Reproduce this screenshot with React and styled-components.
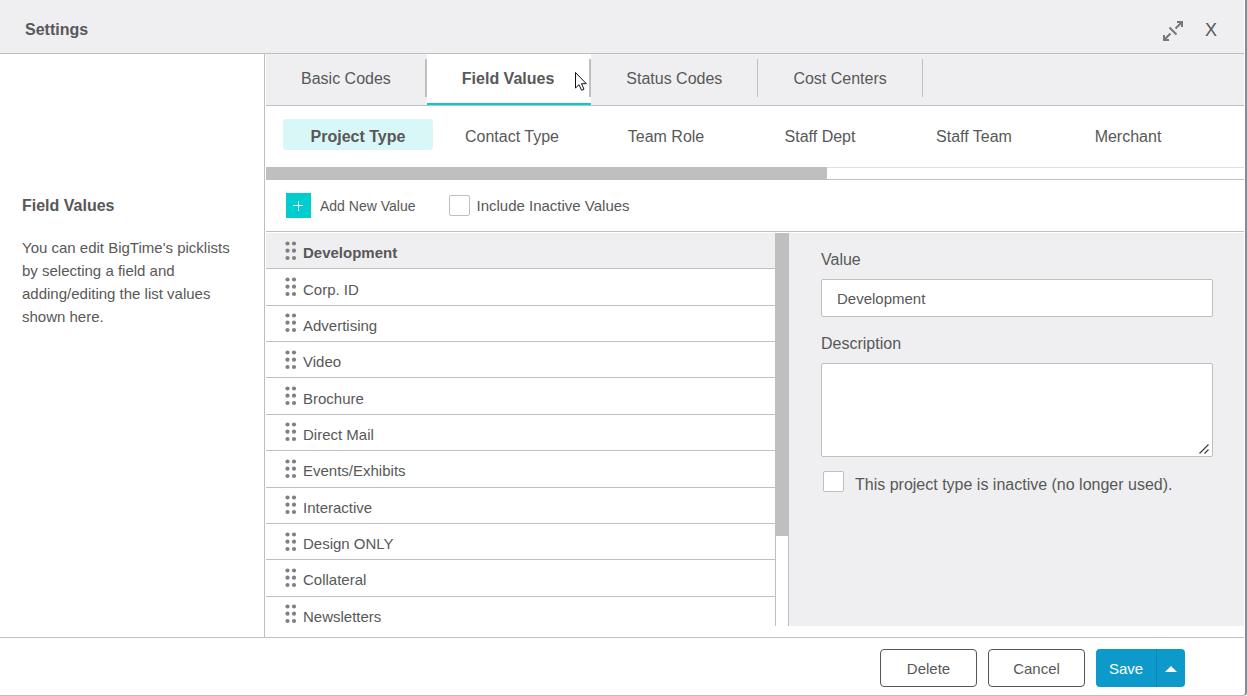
import React from "react";
import styled, { createGlobalStyle, css } from "styled-components";

const Global = createGlobalStyle`
  *, *::before, *::after { box-sizing: border-box; }
  body {
    margin: 0;
    background: #fff;
    color: #585858;
    font-family: "Liberation Sans", Arial, sans-serif;
    font-size: 15px;
  }
  button, input, textarea { font: inherit; color: inherit; }
  h1, h2, p { margin: 0; }
`;

const line = "#bfbfbf";
const shade = "#efeff1";

const Dialog = styled.div`
  display: flex;
  flex-direction: column;
  min-height: 100vh;
  padding-right: 1px;
  border-right: 2px solid #8a8a94;
  border-bottom: 1px solid #bcbcbc;
  border-bottom-right-radius: 4px;
`;

const Header = styled.header`
  display: flex;
  align-items: center;
  gap: 17px;
  height: 54px;
  padding: 6px 23px 0 25px;
  background: ${shade};
  border-bottom: 1px solid ${line};
`;

const Title = styled.h1`
  flex: 1;
  font-size: 16px;
  line-height: 20px;
`;

const IconButton = styled.button`
  display: flex;
  align-items: center;
  justify-content: center;
  min-width: 20px;
  height: 24px;
  padding: 2px 0 0;
  border: 0;
  background: none;
  font-size: 18px;
`;

const Body = styled.div`
  flex: 1;
  display: grid;
  grid-template-columns: 265px minmax(0, 1fr);
`;

const Sidebar = styled.aside`
  padding: 140px 20px 0 22px;
  border-right: 1px solid ${line};
`;

const SideTitle = styled.h2`
  font-size: 16px;
  line-height: 23px;
`;

const SideText = styled.p`
  margin-top: 19px;
  line-height: 23px;
`;

const Content = styled.main`
  display: flex;
  flex-direction: column;
  padding: 0 0 11px 1px;
`;

const Tabs = styled.nav`
  display: flex;
  height: 52px;
  background: ${shade};
  border-bottom: 1px solid ${line};
`;

const Tab = styled.button`
  position: relative;
  padding: 0 36px 2px 35px;
  border: 0;
  background: none;
  font-size: 16px;
  ${(p) =>
    p.$active &&
    css`
      padding: 0 37px 0 35px;
      background: #fff;
      font-weight: bold;
      border-bottom: 2px solid #00cdcd;
    `}
  &::after {
    content: "";
    position: absolute;
    top: 5px;
    right: 0;
    width: ${(p) => (p.$thick ? 2 : 1)}px;
    height: 38px;
    background: ${line};
  }
`;

const SubTabs = styled.nav`
  display: flex;
  gap: 4px;
  height: 61px;
  padding: 13px 17px 0;
  overflow: hidden;
`;

const SubTab = styled.button`
  flex: 0 0 150px;
  height: 31px;
  padding: 5px 0 0;
  border: 0;
  border-radius: 3px;
  background: ${(p) => (p.$active ? "#d9f7f7" : "none")};
  font-size: 16px;
  font-weight: ${(p) => (p.$active ? "bold" : "normal")};
`;

const HScroll = styled.div`
  height: 13px;
  border-top: 1px solid #e0e0e0;
  border-bottom: 1px solid ${line};
`;

const HThumb = styled.div`
  width: 561px;
  height: 13px;
  margin-top: -1px;
  background: ${line};
`;

const Toolbar = styled.div`
  display: flex;
  align-items: center;
  gap: 34px;
  height: 52px;
  padding: 0 20px;
  border-bottom: 1px solid ${line};
`;

const AddButton = styled.button`
  display: flex;
  align-items: center;
  gap: 9px;
  padding: 0;
  border: 0;
  background: none;
  font-size: 14px;
`;

const CheckLabel = styled.label`
  display: flex;
  align-items: center;
  gap: ${(p) => p.$gap}px;
  font-size: ${(p) => p.$size}px;
`;

const LowText = styled.span`
  padding-top: 7px;
`;

const Check = styled.input`
  appearance: none;
  flex: none;
  width: 21px;
  height: 21px;
  margin: 0;
  border: 1px solid ${line};
  border-radius: 2px;
  background: #fff;
`;

const Editor = styled.div`
  flex: 1;
  display: grid;
  grid-template-columns: 509px 14px minmax(0, 1fr);
  margin-top: 1px;
`;

const ListView = styled.div`
  height: 393px;
  overflow: hidden;
`;

const List = styled.ul`
  display: grid;
  grid-template-rows: repeat(11, 1fr);
  height: 400px;
  margin: 0;
  padding: 0;
  list-style: none;
`;

const Row = styled.li`
  display: flex;
  align-items: center;
  gap: 6px;
  padding: 0 19px;
  border-bottom: 1px solid ${line};
  background: ${(p) => (p.$active ? shade : "#fff")};
  font-weight: ${(p) => (p.$active ? "bold" : "normal")};
`;

const RowText = styled.span`
  padding-top: 4px;
`;

const VScroll = styled.div`
  border-left: 1px solid ${line};
  border-right: 1px solid ${line};
`;

const VThumb = styled.div`
  height: 303px;
  margin: 0 -1px;
  background: ${line};
`;

const Detail = styled.form`
  display: flex;
  flex-direction: column;
  padding: 16px 31px 16px 32px;
  background: ${shade};
`;

const FieldLabel = styled.label`
  margin-bottom: 9px;
  font-size: 16px;
  line-height: 21px;
`;

const TextInput = styled.input`
  height: 38px;
  margin-bottom: 16px;
  padding: 1px 15px 0;
  border: 1px solid ${line};
  border-radius: 2px;
  background: #fff;
`;

const AreaWrap = styled.div`
  position: relative;
  margin-bottom: 12px;
`;

const TextArea = styled.textarea`
  display: block;
  width: 100%;
  height: 94px;
  padding: 10px 15px;
  border: 1px solid ${line};
  border-radius: 2px;
  background: #fff;
  resize: none;
`;

const Grip = styled.svg`
  position: absolute;
  right: 4px;
  bottom: 3px;
`;

const InactiveRow = styled.div`
  padding-left: 2px;
`;

const Footer = styled.footer`
  display: flex;
  justify-content: flex-end;
  gap: 11px;
  height: 58px;
  padding: 11px 59px 0;
  border-top: 1px solid ${line};
`;

const Button = styled.button`
  width: 97px;
  height: 38px;
  padding: 1px 0 0;
  border: 1px solid #555;
  border-radius: 4px;
  background: #fff;
`;

const Split = styled.div`
  display: flex;
  height: 38px;
  border-radius: 4px;
  overflow: hidden;
`;

const Primary = styled.button`
  display: flex;
  align-items: center;
  justify-content: center;
  width: ${(p) => (p.$menu ? 29 : 60)}px;
  padding: 1px 0 0;
  border: 0;
  border-left: ${(p) => (p.$menu ? "1px solid #0a86b3" : "0")};
  background: #0d99c9;
  color: #fff;
`;

const Pointer = styled.svg`
  position: absolute;
  top: 17px;
  right: 4px;
`;

const ExpandIcon = () => (
  <svg width="22" height="22" viewBox="0 0 22 22" fill="none" stroke="#777" strokeWidth="2">
    <path d="M13.5 8.5L19 3M8.5 13.5L3 19M7.5 7.5L14.5 14.5" />
    <path d="M15 2H20V7M2 15V20H7" />
    <path d="M16 1H21V6zM1 16V21H6z" fill="#777" stroke="none" />
  </svg>
);

const PlusIcon = () => (
  <svg width="25" height="25" viewBox="0 0 25 25">
    <rect width="25" height="25" fill="#00cdcd" />
    <path d="M7 12.5H17M12.5 8V18" stroke="#fff" />
  </svg>
);

const DragIcon = () => (
  <svg width="12" height="20" viewBox="0 0 12 20" fill="#808080">
    {[2.5, 9.7, 17].map((y) => (
      <React.Fragment key={y}>
        <circle cx="2.5" cy={y} r="2.1" />
        <circle cx="9" cy={y} r="2.1" />
      </React.Fragment>
    ))}
  </svg>
);

const tabs = ["Basic Codes", "Field Values", "Status Codes", "Cost Centers"];
const subTabs = ["Project Type", "Contact Type", "Team Role", "Staff Dept", "Staff Team", "Merchant"];
const values = [
  "Development", "Corp. ID", "Advertising", "Video", "Brochure", "Direct Mail",
  "Events/Exhibits", "Interactive", "Design ONLY", "Collateral", "Newsletters",
];

export default function App() {
  return (
    <>
      <Global />
      <Dialog>
        <Header>
          <Title>Settings</Title>
          <IconButton aria-label="Expand"><ExpandIcon /></IconButton>
          <IconButton aria-label="Close">X</IconButton>
        </Header>
        <Body>
          <Sidebar>
            <SideTitle>Field Values</SideTitle>
            <SideText>
              You can edit BigTime's picklists by selecting a field and adding/editing the list values shown here.
            </SideText>
          </Sidebar>
          <Content>
            <Tabs>
              {tabs.map((t, i) => (
                <Tab key={t} $active={i === 1} $thick={i < 2}>
                  {t}
                  {i === 1 && (
                    <Pointer width="13" height="21" viewBox="0 0 13 21">
                      <path
                        d="M1.5 1.5V17L5 13.7L7.6 19.3L10 18.2L7.5 12.7H12.3Z"
                        fill="#fff" stroke="#111122" strokeWidth="1"
                      />
                    </Pointer>
                  )}
                </Tab>
              ))}
            </Tabs>
            <SubTabs>
              {subTabs.map((t, i) => <SubTab key={t} $active={i === 0}>{t}</SubTab>)}
            </SubTabs>
            <HScroll><HThumb /></HScroll>
            <Toolbar>
              <AddButton><PlusIcon />Add New Value</AddButton>
              <CheckLabel $gap={6} $size={15}>
                <Check type="checkbox" />
                Include Inactive Values
              </CheckLabel>
            </Toolbar>
            <Editor>
              <ListView>
                <List>
                  {values.map((v, i) => (
                    <Row key={v} $active={i === 0}>
                      <DragIcon />
                      <RowText>{v}</RowText>
                    </Row>
                  ))}
                </List>
              </ListView>
              <VScroll><VThumb /></VScroll>
              <Detail>
                <FieldLabel htmlFor="value">Value</FieldLabel>
                <TextInput id="value" defaultValue="Development" />
                <FieldLabel htmlFor="description">Description</FieldLabel>
                <AreaWrap>
                  <TextArea id="description" />
                  <Grip width="10" height="10" viewBox="0 0 10 10" stroke="#444" strokeWidth="1.3">
                    <path d="M0.5 9.5L9.5 0.5M5.5 9.5L9.5 5.5" />
                  </Grip>
                </AreaWrap>
                <InactiveRow>
                  <CheckLabel $gap={11} $size={16}>
                    <Check type="checkbox" />
                    <LowText>This project type is inactive (no longer used).</LowText>
                  </CheckLabel>
                </InactiveRow>
              </Detail>
            </Editor>
          </Content>
        </Body>
        <Footer>
          <Button>Delete</Button>
          <Button>Cancel</Button>
          <Split>
            <Primary>Save</Primary>
            <Primary $menu aria-label="More save options">
              <svg width="12" height="6" viewBox="0 0 12 6"><path d="M0 6L6 0L12 6Z" fill="#fff" /></svg>
            </Primary>
          </Split>
        </Footer>
      </Dialog>
    </>
  );
}
